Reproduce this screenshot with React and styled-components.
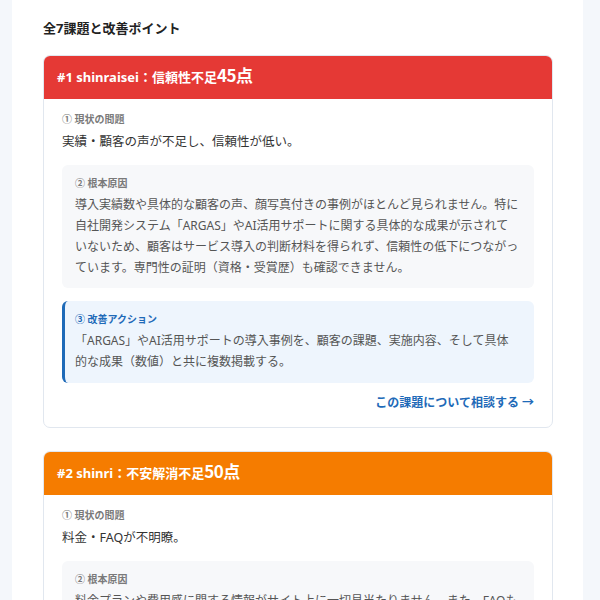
import React from 'react';
import styled, { createGlobalStyle } from 'styled-components';

const GlobalStyle = createGlobalStyle`
  html, body {
    margin: 0;
    height: 600px;
    overflow: hidden;
    background: #f4f7fb;
  }
  body {
    font-family: "Noto Sans", "Noto Sans CJK JP", sans-serif;
    color: #333;
  }
`;

const issues = [
  {
    no: 1,
    key: 'shinraisei',
    name: '信頼性不足',
    score: 45,
    color: '#e53935',
    problem: '実績・顧客の声が不足し、信頼性が低い。',
    cause:
      '導入実績数や具体的な顧客の声、顔写真付きの事例がほとんど見られません。特に自社開発システム「ARGAS」やAI活用サポートに関する具体的な成果が示されていないため、顧客はサービス導入の判断材料を得られず、信頼性の低下につながっています。専門性の証明（資格・受賞歴）も確認できません。',
    action:
      '「ARGAS」やAI活用サポートの導入事例を、顧客の課題、実施内容、そして具体的な成果（数値）と共に複数掲載する。',
  },
  {
    no: 2,
    key: 'shinri',
    name: '不安解消不足',
    score: 50,
    color: '#f57c00',
    problem: '料金・FAQが不明瞭。',
    cause:
      '料金プランや費用感に関する情報がサイト上に一切見当たりません。また、FAQも掲載されていないため、問い合わせ前の疑問や不安を解消できず、離脱の原因となっています。',
    action:
      '料金の目安やプラン例を掲載し、よくある質問をFAQとしてまとめて公開する。',
  },
];

function App() {
  return (
    <>
      <GlobalStyle />
      <Panel>
        <Heading>全7課題と改善ポイント</Heading>
        <CardList>
          {issues.map((issue) => (
            <Card key={issue.no}>
              <CardHeader $color={issue.color}>
                #{issue.no} {issue.key}：{issue.name}
                <Score>{issue.score}点</Score>
              </CardHeader>
              <CardBody>
                <Label>① 現状の問題</Label>
                <Problem>{issue.problem}</Problem>
                <CauseBox>
                  <Label>② 根本原因</Label>
                  <BoxText>{issue.cause}</BoxText>
                </CauseBox>
                <ActionBox>
                  <Label $accent>③ 改善アクション</Label>
                  <BoxText>{issue.action}</BoxText>
                </ActionBox>
                <LinkRow>
                  <ConsultLink href="#">この課題について相談する →</ConsultLink>
                </LinkRow>
              </CardBody>
            </Card>
          ))}
        </CardList>
      </Panel>
    </>
  );
}

const Panel = styled.main`
  margin: 0 17px 0 12px;
  min-height: 600px;
  padding: 18px 30px 0 31px;
  background: #ffffff;
  box-sizing: border-box;
`;

const Heading = styled.h2`
  margin: 0 0 17px;
  font-size: 13px;
  line-height: 20px;
  font-weight: 700;
  color: #222;
`;

const CardList = styled.div`
  display: flex;
  flex-direction: column;
  gap: 23px;
`;

const Card = styled.section`
  border: 1px solid #e1e7ef;
  border-radius: 7px;
  overflow: hidden;
  background: #fff;
`;

const CardHeader = styled.div`
  height: 43px;
  padding: 0 13px;
  box-sizing: border-box;
  line-height: 38px;
  background: ${(p) => p.$color};
  color: #fff;
  font-size: 13px;
  font-weight: 700;
  white-space: nowrap;
`;

const Score = styled.span`
  font-family: "Noto Sans CJK JP", sans-serif;
  font-size: 17px;
  font-weight: 700;
  letter-spacing: -0.5px;
`;

const CardBody = styled.div`
  padding: 13px 18px 15px;
`;

const Label = styled.div`
  font-size: 10px;
  line-height: 15px;
  font-weight: 700;
  color: ${(p) => (p.$accent ? '#1e6ab8' : '#7a7a7a')};
`;

const Problem = styled.p`
  margin: 4px 0 13px;
  font-size: 12.5px;
  line-height: 21px;
  color: #333;
`;

const CauseBox = styled.div`
  padding: 11px 14px 10px 13px;
  background: #f7f8fa;
  border-radius: 6px;
`;

const ActionBox = styled.div`
  margin-top: 13px;
  padding: 11px 14px 11px 10px;
  background: #eef5fd;
  border-left: 3px solid #1e6ab8;
  border-radius: 6px;
`;

const BoxText = styled.p`
  margin: 3px 0 0;
  font-size: 12px;
  line-height: 21px;
  color: #555;
`;

const LinkRow = styled.div`
  display: flex;
  justify-content: flex-end;
  margin-top: 11px;
`;

const ConsultLink = styled.a`
  font-size: 12px;
  line-height: 18px;
  font-weight: 700;
  color: #1e6ab8;
  text-decoration: none;
`;

export default App;
